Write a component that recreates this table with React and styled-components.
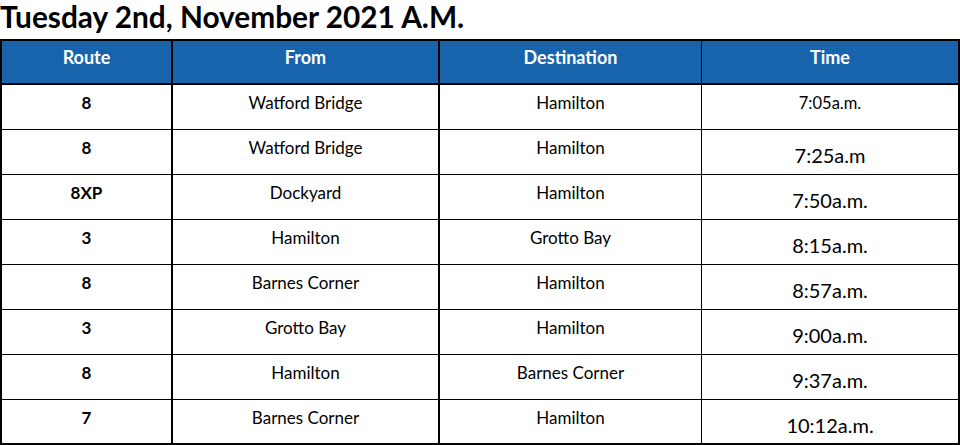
import React from "react";
import styled, { createGlobalStyle } from "styled-components";

const rows = [
  { route: "8", from: "Watford Bridge", to: "Hamilton", time: "7:05a.m.", small: true },
  { route: "8", from: "Watford Bridge", to: "Hamilton", time: "7:25a.m" },
  { route: "8XP", from: "Dockyard", to: "Hamilton", time: "7:50a.m." },
  { route: "3", from: "Hamilton", to: "Grotto Bay", time: "8:15a.m." },
  { route: "8", from: "Barnes Corner", to: "Hamilton", time: "8:57a.m." },
  { route: "3", from: "Grotto Bay", to: "Hamilton", time: "9:00a.m." },
  { route: "8", from: "Hamilton", to: "Barnes Corner", time: "9:37a.m." },
  { route: "7", from: "Barnes Corner", to: "Hamilton", time: "10:12a.m." },
];

export default function App() {
  return (
    <Page>
      <GlobalStyle />
      <Title>Tuesday 2nd, November 2021 A.M.</Title>
      <Schedule>
        <thead>
          <tr>
            <HeadCell $w={171}>Route</HeadCell>
            <HeadCell $w={267}>From</HeadCell>
            <HeadCell $w={262} $thin>Destination</HeadCell>
            <HeadCell $w={258}>Time</HeadCell>
          </tr>
        </thead>
        <tbody>
          {rows.map((r, i) => (
            <Row key={i} $last={i === rows.length - 1}>
              <RouteCell>{r.route}</RouteCell>
              <Cell>{r.from}</Cell>
              <Cell $thin>{r.to}</Cell>
              <TimeCell $small={r.small}>{r.time}</TimeCell>
            </Row>
          ))}
        </tbody>
      </Schedule>
    </Page>
  );
}

const GlobalStyle = createGlobalStyle`
  body {
    margin: 0;
    background: #ffffff;
    font-family: Lato, "Liberation Sans", sans-serif;
    color: #000;
  }
`;

const Page = styled.div`
  width: 960px;
`;

const Title = styled.h1`
  box-sizing: border-box;
  margin: 0;
  height: 39px;
  padding-top: 2px;
  font-size: 29.8px;
  font-weight: 700;
  line-height: 30px;
  color: #000;
`;

const Schedule = styled.table`
  width: 960px;
  table-layout: fixed;
  border-collapse: separate;
  border-spacing: 0;
  border-top: 2px solid #000;
  border-left: 2px solid #000;
`;

const HeadCell = styled.th`
  box-sizing: border-box;
  width: ${(p) => p.$w}px;
  height: 44px;
  padding: 6px 0 0;
  vertical-align: top;
  background: #1764ad;
  color: #fff;
  font-size: 18px;
  font-weight: 700;
  line-height: 20px;
  text-align: center;
  border-bottom: 2px solid #000;
  border-right: ${(p) => (p.$thin ? "1px" : "2px")} solid #000;
`;

const Row = styled.tr`
  td {
    border-bottom: ${(p) => (p.$last ? "2px" : "1px")} solid #000;
  }
`;

const Cell = styled.td`
  box-sizing: border-box;
  height: 45px;
  padding: 8px 0 0;
  vertical-align: top;
  text-align: center;
  font-size: 17px;
  line-height: 20px;
  border-right: ${(p) => (p.$thin ? "1px" : "2px")} solid #000;
`;

const RouteCell = styled(Cell)`
  font-weight: 700;
`;

const TimeCell = styled(Cell)`
  padding-top: ${(p) => (p.$small ? "8px" : "15px")};
  font-size: ${(p) => (p.$small ? "16.5px" : "20px")};
  border-right: 2px solid #000;
`;
